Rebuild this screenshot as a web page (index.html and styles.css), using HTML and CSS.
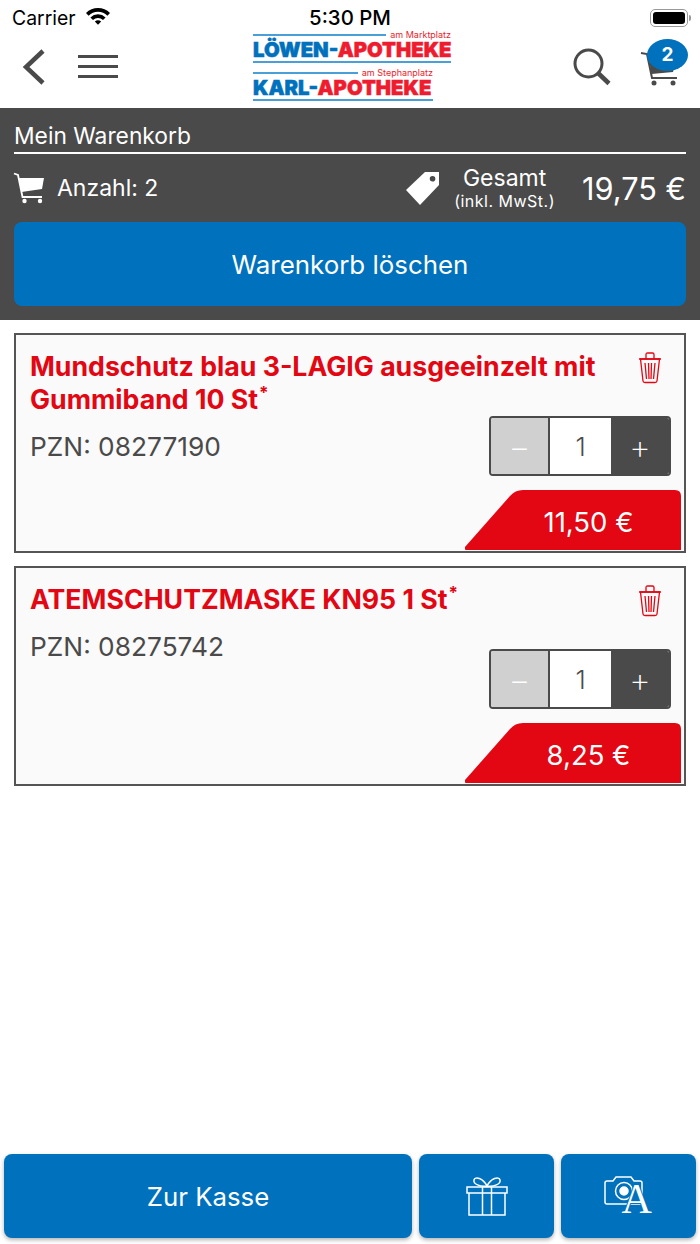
FILE: index.html
```html
<!DOCTYPE html>
<html lang="de">
<head>
    <meta charset="UTF-8">
    <meta name="viewport" content="width=device-width, initial-scale=1.0">
    <title>Mein Warenkorb</title>
    <link rel="stylesheet" href="styles.css">
</head>
<body>
    <div class="page">
        <!-- Statusleiste -->
        <div class="statusbar">
            <div class="status-left">
                <span>Carrier</span>
                <svg class="wifi" viewBox="0 0 26 19" width="26" height="19">
                    <path d="M1 7 A17 17 0 0 1 25 7 L22.4 9.7 A13.4 13.4 0 0 0 3.6 9.7 Z" fill="#000"/>
                    <path d="M5.4 11.4 A11 11 0 0 1 20.6 11.4 L18 14 A7.4 7.4 0 0 0 8 14 Z" fill="#000"/>
                    <path d="M9.8 15.6 A4.8 4.8 0 0 1 16.2 15.6 L13 18.8 Z" fill="#000"/>
                </svg>
            </div>
            <div class="status-time">5:30 PM</div>
            <div class="status-right">
                <span class="battery"><span class="battery-fill"></span></span>
                <span class="battery-tip"></span>
            </div>
        </div>

        <!-- Kopfzeile -->
        <header class="topbar">
            <div class="topbar-left">
                <svg viewBox="0 0 24 36" width="24" height="36">
                    <path d="M21 2 L4 18 L21 34" fill="none" stroke="#4a4a4a" stroke-width="4.5"/>
                </svg>
                <div class="burger"><span></span><span></span><span></span></div>
            </div>
            <div class="logo">
                <div class="logo-sub"><i></i><span>am Marktplatz</span></div>
                <div class="logo-name"><b>LÖWEN-</b>APOTHEKE</div>
                <div class="logo-rule"></div>
                <div class="logo-second">
                    <div class="logo-sub"><i></i><span>am Stephanplatz</span></div>
                    <div class="logo-name"><b>KARL-</b>APOTHEKE</div>
                    <div class="logo-rule"></div>
                </div>
            </div>
            <div class="topbar-right">
                <svg viewBox="0 0 38 38" width="38" height="38">
                    <circle cx="15.500" cy="15.500" r="13.500" fill="none" stroke="#4a4a4a" stroke-width="3"/>
                    <path d="M25 25 L36 35.500" stroke="#4a4a4a" stroke-width="4.500"/>
                </svg>
                <div class="cart-wrap">
                    <svg viewBox="0 0 40 40" width="40" height="40">
                        <path d="M1 6 L7 7 L12 31 H37" fill="none" stroke="#4a4a4a" stroke-width="2"/>
                        <path d="M9 13 H36 L33 25 L11.500 27 Z" fill="#4a4a4a"/>
                        <circle cx="14" cy="36" r="2.500" fill="#4a4a4a"/>
                        <circle cx="33" cy="36" r="2.500" fill="#4a4a4a"/>
                    </svg>
                    <span class="badge">2</span>
                </div>
            </div>
        </header>

        <!-- Warenkorb Zusammenfassung -->
        <section class="summary">
            <h1>Mein Warenkorb</h1>
            <div class="summary-row">
                <div class="count">
                    <svg viewBox="0 0 32 32" width="32" height="32">
                        <path d="M1 1.500 L5 3 L9.500 25 H29" fill="none" stroke="#fff" stroke-width="1.800"/>
                        <path d="M6 6 H31 L29 17 L8.500 20 Z" fill="#fff"/>
                        <circle cx="11.500" cy="29" r="2.200" fill="#fff"/>
                        <circle cx="27" cy="29" r="2.200" fill="#fff"/>
                    </svg>
                    <span>Anzahl: 2</span>
                </div>
                <div class="total">
                    <svg viewBox="0 0 34 34" width="34" height="34">
                        <path fill-rule="evenodd" fill="#fff" d="M0 19 L19 1 L33 1 L33 14 L14 34 Z M26.500 5 A2.800 2.800 0 1 0 26.600 10.600 A2.800 2.800 0 1 0 26.500 5 Z"/>
                    </svg>
                    <div class="total-label">
                        <span>Gesamt</span>
                        <small>(inkl. MwSt.)</small>
                    </div>
                    <div class="total-price">19,75 €</div>
                </div>
            </div>
            <button class="btn btn-clear">Warenkorb löschen</button>
        </section>

        <!-- Artikel -->
        <main class="items">
            <article class="item">
                <div class="item-text">
                    <h2>Mundschutz blau 3-LAGIG ausgeeinzelt mit Gummiband 10 St<sup>*</sup></h2>
                    <p>PZN: 08277190</p>
                </div>
                <svg class="trash" viewBox="0 0 24 32" width="24" height="32">
                    <use href="#trash-icon"/>
                </svg>
                <div class="stepper">
                    <span class="step minus">−</span>
                    <span class="qty">1</span>
                    <span class="step plus">+</span>
                </div>
                <div class="price">11,50 €</div>
            </article>

            <article class="item">
                <div class="item-text">
                    <h2>ATEMSCHUTZMASKE KN95 1 St<sup>*</sup></h2>
                    <p>PZN: 08275742</p>
                </div>
                <svg class="trash" viewBox="0 0 24 32" width="24" height="32">
                    <use href="#trash-icon"/>
                </svg>
                <div class="stepper">
                    <span class="step minus">−</span>
                    <span class="qty">1</span>
                    <span class="step plus">+</span>
                </div>
                <div class="price">8,25 €</div>
            </article>
        </main>

        <!-- Untere Buttons -->
        <footer class="bottom">
            <button class="btn btn-checkout">Zur Kasse</button>
            <button class="btn btn-icon">
                <svg viewBox="0 0 42 40" width="42" height="40" fill="none" stroke="#fff" stroke-width="1.500">
                    <path d="M1 11 H41 V17 H1 Z M3 17 H39 V39 H3 Z M16.500 11 V39 M25.500 11 V39"/>
                    <path d="M21 10 C14 11 7 8 8 4 C9 0 17 2 21 10 C25 2 33 0 34 4 C35 8 28 11 21 10 Z"/>
                </svg>
            </button>
            <button class="btn btn-icon">
                <span class="camera-a">
                    <svg viewBox="0 0 40 30" width="40" height="30" fill="none" stroke="#fff" stroke-width="1.500">
                        <path d="M3 5 H9 L12 1 H27 L30 5 H36 Q38 5 38 7 V26 Q38 28 36 28 H3 Q1 28 1 26 V7 Q1 5 3 5 Z"/>
                        <circle cx="20" cy="15" r="8.500"/>
                        <circle cx="20" cy="15" r="4" fill="#fff"/>
                    </svg>
                    <span class="letter-a">A</span>
                </span>
            </button>
        </footer>

        <svg class="defs" width="0" height="0">
            <symbol id="trash-icon" viewBox="0 0 24 32">
                <g fill="none" stroke="#e30613" stroke-width="1.300">
                    <path d="M1 7 H23 M8 6.500 V2.500 Q8 1 9.500 1 H14.500 Q16 1 16 2.500 V6.500"/>
                    <path d="M2.500 7 L5 29 Q5.200 30.500 7 30.500 H17 Q18.800 30.500 19 29 L21.500 7 Z"/>
                    <path d="M7 11 L8.500 27 M10.500 11 L11 27 M13.500 11 L13 27 M17 11 L15.500 27"/>
                </g>
            </symbol>
        </svg>
    </div>
</body>
</html>
```

FILE: styles.css
```css
/* Allgemein */
body {
    margin: 0;
    font-family: 'Inter', 'Liberation Sans', sans-serif;
    color: #4a4a4a;
    background-color: #fff;
}

.page {
    display: flex;
    flex-direction: column;
    min-height: 1244px;
}

.defs {
    display: none;
}

/* Statusleiste */
.statusbar {
    display: grid;
    grid-template-columns: 1fr auto 1fr;
    align-items: center;
    height: 30px;
    padding: 5px 12px 0;
    box-sizing: border-box;
    font-size: 19.400px;
    color: #000;
}

.status-left {
    display: flex;
    align-items: center;
    gap: 9px;
}

.wifi {
    margin-top: -5px;
}

.status-time {
    font-weight: 500;
    font-size: 20.400px;
}

.status-right {
    display: flex;
    align-items: center;
    justify-content: flex-end;
    gap: 1px;
    margin-right: -3px;
}

.battery {
    display: flex;
    width: 38px;
    height: 18px;
    padding: 2px;
    box-sizing: border-box;
    border: 1.500px solid #999;
    border-radius: 5px;
}

.battery-fill {
    flex: 1;
    background-color: #000;
    border-radius: 3px;
}

.battery-tip {
    width: 2px;
    height: 6px;
    background-color: #999;
    border-radius: 0 2px 2px 0;
}

/* Kopfzeile */
.topbar {
    display: flex;
    align-items: center;
    height: 78px;
    padding: 0 20px 7px 22px;
    box-sizing: border-box;
}

.topbar-left,
.topbar-right {
    display: flex;
    align-items: center;
    flex: 1;
}

.topbar-left {
    gap: 32px;
    padding-top: 2px;
}

.topbar-right {
    justify-content: flex-end;
    gap: 29px;
    padding-top: 2px;
}

.burger {
    display: flex;
    flex-direction: column;
    gap: 7px;
    width: 40px;
}

.burger span {
    height: 3px;
    background-color: #4a4a4a;
}

.logo {
    width: 198px;
    margin-left: 2px;
    color: #ee1c2e;
}

.logo-sub {
    display: flex;
    align-items: center;
    gap: 4px;
    height: 10px;
    font-size: 9px;
    line-height: 10px;
}

.logo-sub i {
    flex: 1;
    height: 2px;
    background-color: #4a9fd8;
}

.logo-name {
    font-weight: 900;
    font-size: 20.300px;
    line-height: 19px;
    white-space: nowrap;
    -webkit-text-stroke: 0.5px currentColor;
}

.logo-name b {
    color: #0071bc;
    font-weight: 900;
}

.logo-rule {
    height: 2px;
    margin-top: 2px;
    background-color: #4a9fd8;
}

.logo-second {
    width: 180px;
    margin-top: 5px;
}

.cart-wrap {
    position: relative;
    width: 40px;
    height: 40px;
}

.badge {
    position: absolute;
    top: -8px;
    left: 7px;
    width: 41px;
    height: 32px;
    border-radius: 50%;
    background-color: #0071bc;
    color: #fff;
    font-size: 19px;
    font-weight: 700;
    line-height: 32px;
    text-align: center;
}

/* Warenkorb Zusammenfassung */
.summary {
    height: 212px;
    padding: 0 14px;
    box-sizing: border-box;
    background-color: #4a4a4a;
    color: #fff;
}

.summary h1 {
    margin: 0;
    height: 46px;
    padding-top: 13px;
    box-sizing: border-box;
    border-bottom: 2px solid #fff;
    font-size: 22.800px;
    font-weight: 400;
    line-height: 30px;
}

.summary-row {
    display: flex;
    justify-content: space-between;
    align-items: center;
    height: 68px;
}

.count {
    display: flex;
    align-items: center;
    gap: 12px;
    margin-left: -1px;
    font-size: 23px;
}

.total {
    display: flex;
    align-items: center;
}

.total-label {
    display: flex;
    flex-direction: column;
    align-items: center;
    margin-left: 14px;
    margin-right: 27px;
    font-size: 23px;
    line-height: 26px;
}

.total-label small {
    font-size: 16px;
    line-height: 20px;
    letter-spacing: 0.5px;
}

.total-price {
    font-size: 30.700px;
}

.btn {
    border: none;
    border-radius: 8px;
    background-color: #0071bc;
    color: #fff;
    font-family: inherit;
}

.btn-clear {
    display: block;
    width: 100%;
    height: 84px;
    font-size: 25.900px;
}

/* Artikel */
.items {
    display: flex;
    flex-direction: column;
    gap: 13px;
    padding: 13px 14px 0;
}

.item {
    display: grid;
    grid-template-columns: 1fr auto;
    grid-template-rows: 81px 60px 1fr;
    height: 220px;
    padding: 0 13px 0 14px;
    box-sizing: border-box;
    border: 2px solid #555;
    background-color: #fafafa;
}

.item-text {
    grid-column: 1 / 3;
    grid-row: 1 / 3;
    padding: 15px 60px 0 0;
}

.item-text h2 {
    margin: 0;
    font-size: 26.700px;
    font-weight: 700;
    line-height: 33px;
    color: #e30613;
}

.item-text sup {
    margin-left: 1px;
    font-size: 17px;
    font-weight: 700;
    line-height: 0;
}

.item-text p {
    margin: 15px 0 0;
    font-size: 26.300px;
    line-height: 32px;
}

.trash {
    grid-column: 2;
    grid-row: 1;
    justify-self: end;
    margin: 17px 9px 0 0;
}

.stepper {
    grid-column: 2;
    grid-row: 2;
    display: flex;
    width: 182px;
    height: 60px;
    box-sizing: border-box;
    border: 2px solid #4a4a4a;
    border-radius: 4px;
    overflow: hidden;
}

.step {
    display: flex;
    align-items: center;
    justify-content: center;
    font-size: 34px;
    font-weight: 200;
    color: #fff;
}

.minus {
    width: 57px;
    background-color: #d0d0d0;
}

.plus {
    flex: 1;
    background-color: #4a4a4a;
}

.qty {
    display: flex;
    align-items: center;
    justify-content: center;
    width: 63px;
    box-sizing: border-box;
    border-left: 2px solid #4a4a4a;
    background-color: #fff;
    font-size: 26px;
    font-weight: 300;
}

.price {
    grid-column: 1 / 3;
    grid-row: 3;
    justify-self: end;
    align-self: end;
    display: flex;
    align-items: center;
    justify-content: center;
    width: 216px;
    height: 60px;
    margin: 0 -10px 1px 0;
    padding: 3px 0 0 31px;
    box-sizing: border-box;
    background-color: #e30613;
    color: #fff;
    font-size: 27.500px;
    clip-path: path('M0 57 L45 6 Q50 0 58 0 H210 Q216 0 216 6 V60 H3 Q-2 60 0 57 Z');
}

/* Untere Buttons */
.bottom {
    display: flex;
    gap: 7px;
    margin-top: auto;
    padding: 0 4px 6px;
}

.bottom .btn {
    height: 84px;
    box-shadow: 0 2px 4px rgba(0, 0, 0, 0.3);
}

.btn-checkout {
    width: 408px;
    font-size: 25.800px;
}

.btn-icon {
    display: flex;
    align-items: center;
    justify-content: center;
    width: 135px;
}

.camera-a {
    position: relative;
    display: block;
    width: 50px;
    height: 40px;
}

.camera-a svg {
    display: block;
}

.letter-a {
    position: absolute;
    top: 4px;
    left: 18px;
    font-family: 'Liberation Serif', serif;
    font-size: 42px;
    line-height: 38px;
    color: #fff;
    -webkit-text-stroke: 2px #0071bc;
    paint-order: stroke fill;
}
```
